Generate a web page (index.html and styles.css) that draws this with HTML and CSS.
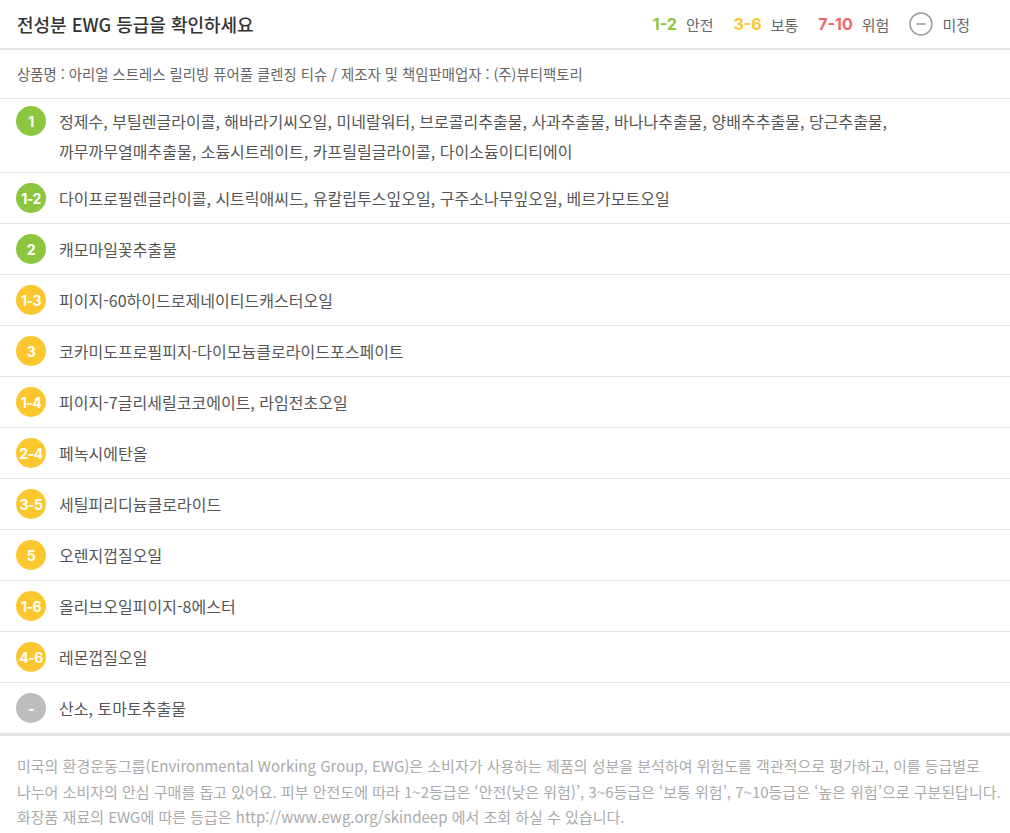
FILE: index.html
```html
<!DOCTYPE html>
<html lang="ko">
<head>
<meta charset="utf-8">
<title>전성분 EWG 등급</title>
<link rel="stylesheet" href="styles.css">
</head>
<body>
<div class="ewg">
  <header class="head">
    <h2 class="title">전성분 EWG 등급을 확인하세요</h2>
    <ul class="legend">
      <li><span class="num green">1-2</span> 안전</li>
      <li><span class="num yellow">3-6</span> 보통</li>
      <li><span class="num red">7-10</span> 위험</li>
      <li><svg class="minus" width="24" height="24" viewBox="0 0 24 24"><circle cx="12" cy="12" r="11" fill="none" stroke="#9a9a9a" stroke-width="1.5"/><line x1="7.5" y1="12" x2="16.5" y2="12" stroke="#9a9a9a" stroke-width="1.5"/></svg> 미정</li>
    </ul>
  </header>
  <p class="product">상품명 : 아리얼 스트레스 릴리빙 퓨어풀 클렌징 티슈 / 제조자 및 책임판매업자 : (주)뷰티팩토리</p>
  <ul class="list">
    <li class="row multi"><span class="badge green">1</span><span class="names">정제수, 부틸렌글라이콜, 해바라기씨오일, 미네랄워터, 브로콜리추출물, 사과추출물, 바나나추출물, 양배추추출물, 당근추출물,<br>까무까무열매추출물, 소듐시트레이트, 카프릴릴글라이콜, 다이소듐이디티에이</span></li>
    <li class="row"><span class="badge green">1-2</span><span class="names">다이프로필렌글라이콜, 시트릭애씨드, 유칼립투스잎오일, 구주소나무잎오일, 베르가모트오일</span></li>
    <li class="row"><span class="badge green">2</span><span class="names">캐모마일꽃추출물</span></li>
    <li class="row"><span class="badge yellow">1-3</span><span class="names">피이지-60하이드로제네이티드캐스터오일</span></li>
    <li class="row"><span class="badge yellow">3</span><span class="names">코카미도프로필피지-다이모늄클로라이드포스페이트</span></li>
    <li class="row"><span class="badge yellow">1-4</span><span class="names">피이지-7글리세릴코코에이트, 라임전초오일</span></li>
    <li class="row"><span class="badge yellow">2-4</span><span class="names">페녹시에탄올</span></li>
    <li class="row"><span class="badge yellow">3-5</span><span class="names">세틸피리디늄클로라이드</span></li>
    <li class="row"><span class="badge yellow">5</span><span class="names">오렌지껍질오일</span></li>
    <li class="row"><span class="badge yellow">1-6</span><span class="names">올리브오일피이지-8에스터</span></li>
    <li class="row"><span class="badge yellow">4-6</span><span class="names">레몬껍질오일</span></li>
    <li class="row"><span class="badge gray">-</span><span class="names">산소, 토마토추출물</span></li>
  </ul>
  <p class="note">미국의 환경운동그룹(Environmental Working Group, EWG)은 소비자가 사용하는 제품의 성분을 분석하여 위험도를 객관적으로 평가하고, 이를 등급별로<br>나누어 소비자의 안심 구매를 돕고 있어요. 피부 안전도에 따라 1~2등급은 ‘안전(낮은 위험)’, 3~6등급은 ‘보통 위험’, 7~10등급은 ‘높은 위험’으로 구분된답니다.<br>화장품 재료의 EWG에 따른 등급은 http://www.ewg.org/skindeep 에서 조회 하실 수 있습니다.</p>
</div>
</body>
</html>
```

FILE: styles.css
```css
* { box-sizing: border-box; }
html, body { margin: 0; padding: 0; background: #fff; }
body {
  font-family: "Noto Sans CJK KR", "Noto Sans", sans-serif;
  color: #555;
}
ul { list-style: none; margin: 0; padding: 0; }
p { margin: 0; }

.ewg { width: 1010px; }

.head {
  display: flex;
  align-items: center;
  justify-content: space-between;
  height: 50px;
  padding: 0 40px 0 17px;
  border-bottom: 2px solid #e2e2e2;
}
.title {
  margin: 0;
  font-size: 18px;
  font-weight: 500;
  color: #333;
  letter-spacing: 0;
}
.legend {
  display: flex;
  align-items: center;
  gap: 20px;
  font-size: 15px;
  color: #666;
}
.legend li { display: flex; align-items: center; gap: 9px; }
.num {
  font-family: "Inter", "Liberation Sans", sans-serif;
  font-weight: 700;
  font-size: 16px;
}
.num.green { color: #8cc63f; }
.num.yellow { color: #fcc72e; }
.num.red { color: #f0646b; }
.minus { display: block; }

.product {
  height: 49px;
  line-height: 48px;
  padding-left: 17px;
  font-size: 14.4px;
  color: #666;
  letter-spacing: 0;
  border-bottom: 1px solid #e5e5e5;
}

.row {
  display: flex;
  align-items: center;
  gap: 13px;
  min-height: 51px;
  padding: 7px 0 7px 16px;
  border-bottom: 1px solid #e5e5e5;
}
.row.multi { align-items: flex-start; padding-bottom: 6px; }
.badge {
  flex: none;
  width: 30px;
  height: 30px;
  border-radius: 50%;
  display: flex;
  align-items: center;
  justify-content: center;
  color: #fff;
  font-family: "Inter", "Liberation Sans", sans-serif;
  font-weight: 700;
  font-size: 14px;
  letter-spacing: -0.5px;
}
.badge.green { background: #8cc63f; }
.badge.yellow { background: #fcc72e; }
.badge.gray { background: #bdbdbd; }
.names {
  font-size: 16px;
  line-height: 30px;
  color: #555;
  letter-spacing: 0.02px;
}

.list { border-bottom: 2px solid #e2e2e2; }

.note {
  padding: 17px 0 0 17px;
  font-size: 15px;
  line-height: 25.5px;
  color: #aaa;
  letter-spacing: 0;
  white-space: nowrap;
}
```
